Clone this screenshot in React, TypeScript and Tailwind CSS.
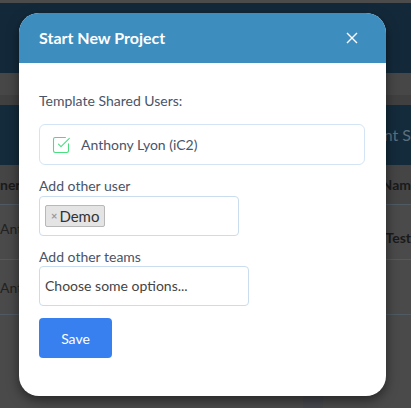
import React from 'react';
import { SquareCheckBig } from 'lucide-react';

const font = { fontFamily: 'Lato, Roboto, "Liberation Sans", sans-serif' };

const Backdrop: React.FC = () => (
  <div className="flex flex-col w-full h-full bg-[#4a4a4a]">
    <div className="h-[3px] bg-[#4b4b4b]" />
    <div className="h-[70px] bg-[#13293a]" />
    <div className="h-[22px] bg-[#474747]" />
    <div className="h-[10px] bg-[#404040]" />
    <div className="h-[60px] bg-[#142b3c] flex items-center justify-end">
      <span className="text-[16px] text-[#5d6f7c]">nt S</span>
    </div>
    <div className="h-[40px] bg-[#454545] flex items-center justify-between border-b border-[#505a62]">
      <span className="text-[14px] font-bold text-[#1a1a1a]">ner</span>
      <span className="text-[14px] font-bold text-[#1a1a1a]">Nam</span>
    </div>
    <div className="h-[55px] flex items-start justify-between border-b border-[#505a62]">
      <span className="text-[14px] text-[#222] mt-[13px]">Anth</span>
      <span className="text-[14px] font-bold text-[#1a1a1a] mt-[22px]">Test</span>
    </div>
    <div className="h-[55px] flex items-center border-b border-[#505a62]">
      <span className="text-[14px] text-[#222]">Anth</span>
    </div>
    <div className="flex-1 flex justify-end">
      <div className="mt-auto mr-[88px] w-[20px] h-[12px] bg-[#45474c]" />
    </div>
  </div>
);

const Modal: React.FC = () => (
  <div className="absolute left-[19px] top-[13px] w-[367px] h-[383px] bg-white rounded-[20px] overflow-hidden shadow-[0_4px_12px_rgba(0,0,0,0.5)] flex flex-col">
    {/* Header */}
    <div className="h-[50px] bg-[#3d8dbf] flex items-center justify-between pl-[20px] pr-[28px] shrink-0">
      <h2 className="text-[16px] font-bold text-white">Start New Project</h2>
      <svg className="w-[12px] h-[12px]" viewBox="0 0 12 12" fill="none" stroke="white" strokeWidth="1.4">
        <path d="M1 1l10 10M11 1L1 11" />
      </svg>
    </div>

    {/* Body */}
    <div className="flex flex-col px-[20px] pt-[29px]">
      <p className="text-[14px] text-[#4a5468] leading-[18px]">Template Shared Users:</p>

      <div className="mt-[14px] h-[41px] w-[326px] border border-[#d3e5f5] rounded-[6px] flex items-center px-[11px]">
        <SquareCheckBig className="w-[20px] h-[20px] text-[#4ade80]" strokeWidth={1.3} />
        <span className="ml-[10px] text-[14px] text-[#4a5468]">Anthony Lyon (iC2)</span>
      </div>

      <label className="mt-[12px] text-[14px] text-[#4a5468] leading-[18px]">Add other user</label>
      <div className="mt-[1px] h-[40px] w-[200px] border border-[#c9ddef] rounded-[4px] pt-[5px] pl-[5px]">
        <span className="inline-flex items-center h-[22px] px-[5px] bg-[#e4e4e4] border border-[#b8b8b8] rounded-[2px]">
          <span className="text-[11px] font-bold text-[#999] mr-[2px]">×</span>
          <span className="text-[15px] text-[#333]">Demo</span>
        </span>
      </div>

      <label className="mt-[12px] text-[14px] text-[#4a5468] leading-[18px]">Add other teams</label>
      <div className="h-[40px] w-[210px] border border-[#c9ddef] rounded-[4px] pt-[6px] pl-[5px]">
        <span className="text-[14px] text-[#444]">Choose some options...</span>
      </div>

      <button className="mt-[12px] w-[73px] h-[40px] bg-[#3880f0] rounded-[4px] text-white text-[14px]">
        Save
      </button>
    </div>
  </div>
);

export default function App() {
  return (
    <div className="relative w-[411px] h-[408px] overflow-hidden" style={font}>
      <Backdrop />
      <Modal />
    </div>
  );
}
